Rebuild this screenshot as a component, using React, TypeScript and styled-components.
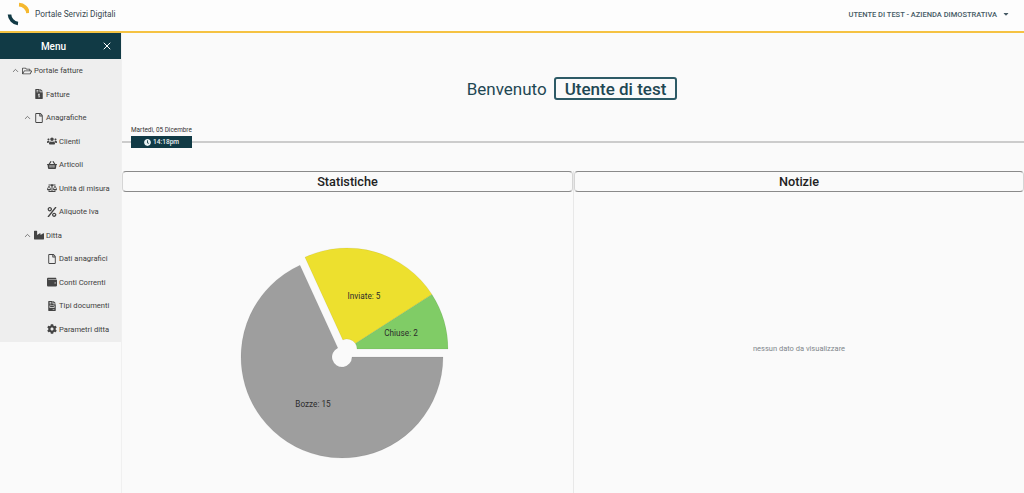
import React from 'react';
import { ChevronUp, X } from 'lucide-react';
import {
  FaBalanceScale,
  FaCaretDown,
  FaClock,
  FaCog,
  FaFileInvoice,
  FaFileInvoiceDollar,
  FaIndustry,
  FaPercent,
  FaRegFile,
  FaRegFolderOpen,
  FaShoppingBasket,
  FaUsers,
  FaWallet,
} from 'react-icons/fa';
import styled, { createGlobalStyle } from 'styled-components';

const GlobalStyle = createGlobalStyle`
  html, body {
    margin: 0;
    height: 100%;
    overflow: hidden;
    background: #fafafa;
    font-family: Roboto, "Liberation Sans", sans-serif;
  }
  #root {
    height: 100%;
  }
`;

const Page = styled.div`
  display: flex;
  flex-direction: column;
  height: 493px;
  width: 1024px;
`;

const TopBar = styled.header`
  box-sizing: border-box;
  flex: none;
  height: 33px;
  display: flex;
  align-items: center;
  justify-content: space-between;
  padding: 0 14px 3px 7px;
  background: #fdfdfd;
  border-bottom: 2px solid #f5c242;
`;

const Brand = styled.div`
  display: flex;
  align-items: center;
  gap: 6px;
  font-size: 8.3px;
  color: #37474f;
`;

const UserMenu = styled.div`
  display: flex;
  align-items: center;
  gap: 5px;
  font-size: 7.5px;
  font-weight: 500;
  color: #455a64;
`;

const Body = styled.div`
  flex: 1;
  display: flex;
  min-height: 0;
`;

const Sidebar = styled.aside`
  box-sizing: border-box;
  flex: none;
  width: 122px;
  border-right: 1px solid #f0f0f0;
`;

const MenuHeader = styled.div`
  height: 26px;
  display: flex;
  align-items: center;
  justify-content: center;
  position: relative;
  padding-right: 14px;
  background: #113a45;
  color: #fff;
  font-size: 10px;
  font-weight: 500;
`;

const CloseButton = styled.span`
  position: absolute;
  right: 8px;
  top: 7px;
  display: flex;
`;

const MenuList = styled.ul`
  list-style: none;
  margin: 0;
  padding: 0 0 0.5px;
  background: #eeeeee;
`;

const MenuItem = styled.li<{ $indent: number }>`
  height: 23.5px;
  display: flex;
  align-items: center;
  gap: 1px;
  padding-left: ${({ $indent }) => $indent}px;
  font-size: 7.6px;
  color: #404040;
`;

const Caret = styled.span`
  display: flex;
  width: 9px;
  justify-content: center;
  color: #555;
`;

const IconSlot = styled.span`
  display: flex;
  width: 12px;
  justify-content: center;
  font-size: 10px;
  color: #444;
`;

const Main = styled.main`
  flex: 1;
  display: flex;
  flex-direction: column;
  min-width: 0;
`;

const Welcome = styled.div`
  display: flex;
  align-items: center;
  justify-content: center;
  gap: 7px;
  height: 23px;
  margin-top: 44px;
  padding-right: 2px;
  color: #1f4753;
  font-size: 17px;
`;

const UserBadge = styled.span`
  box-sizing: border-box;
  height: 23px;
  display: flex;
  align-items: center;
  padding: 0 9px;
  border: 2px solid #2d5a66;
  border-radius: 3px;
  font-weight: 500;
`;

const Timeline = styled.div`
  margin-top: 25px;
  padding-left: 9px;
  height: 25px;
  background: linear-gradient(#cccccc, #cccccc) 0 16px / 100% 2px no-repeat;
`;

const DateLabel = styled.div`
  font-size: 6.4px;
  line-height: 11px;
  color: #333;
`;

const TimeChip = styled.div`
  box-sizing: border-box;
  width: 61px;
  height: 12px;
  display: flex;
  align-items: center;
  justify-content: center;
  gap: 2px;
  background: #113a45;
  color: #e9f1f2;
  font-size: 6.6px;
  font-weight: 500;
`;

const Panels = styled.div`
  flex: 1;
  display: grid;
  grid-template-columns: 452px 1fr;
  margin-top: 21px;
  min-height: 0;
`;

const Panel = styled.section<{ $divided?: boolean }>`
  box-sizing: border-box;
  display: flex;
  flex-direction: column;
  min-height: 0;
  border-right: ${({ $divided }) => ($divided ? '1px solid #e8e8e8' : 'none')};
`;

const PanelTitle = styled.h2`
  box-sizing: border-box;
  flex: none;
  height: 21px;
  margin: 0;
  display: flex;
  align-items: center;
  justify-content: center;
  border: 1px solid #8a8a8a;
  border-left-color: #d5d5d5;
  border-right-color: #d5d5d5;
  border-radius: 4px;
  font-size: 12.7px;
  font-weight: 500;
  color: #222;
`;

const ChartArea = styled.div`
  flex: 1;
  position: relative;
`;

const Empty = styled.div`
  flex: 1;
  display: flex;
  align-items: center;
  justify-content: center;
  padding-top: 11px;
  font-size: 7.5px;
  color: #80868b;
`;

const PieSvg = styled.svg`
  position: absolute;
  left: 0;
  top: 0;
`;

const SliceLabel = styled.text`
  font-size: 8.2px;
  font-family: Roboto, "Liberation Sans", sans-serif;
  fill: #2c2c2c;
  text-anchor: middle;
`;

type Slice = { from: number; to: number; fill: string; cx: number; cy: number };

const polar = (cx: number, cy: number, r: number, deg: number) => {
  const a = (deg * Math.PI) / 180;
  return `${cx + r * Math.cos(a)} ${cy + r * Math.sin(a)}`;
};

const slicePath = ({ from, to, cx, cy }: Slice) => {
  const big = to - from > 180 ? 1 : 0;
  return [
    `M${polar(cx, cy, 101, from)}`,
    `A101 101 0 ${big} 1 ${polar(cx, cy, 101, to)}`,
    `L${polar(cx, cy, 10, to)}`,
    `A10 10 0 ${big} 0 ${polar(cx, cy, 10, from)}`,
    'Z',
  ].join(' ');
};

// centres are relative to the chart area, which starts at 122,192
const slices: Slice[] = [
  { from: 0, to: 245.4, fill: '#9e9e9e', cx: 220, cy: 165 },
  { from: 245.4, to: 327.3, fill: '#ede02e', cx: 225, cy: 157 },
  { from: 327.3, to: 360, fill: '#80cc66', cx: 225, cy: 157 },
];

const Logo = () => (
  <svg width="22" height="24" viewBox="0 0 22 24">
    <path d="M12 2.6A9.5 9.5 0 0 1 21 11" fill="none" stroke="#f5b82e" strokeWidth="3.6" />
    <path d="M2.5 12.5A9.5 9.5 0 0 0 11 21.5" fill="none" stroke="#113a45" strokeWidth="3.6" />
  </svg>
);

const menu = [
  { label: 'Portale fatture', indent: 11, caret: true, icon: <FaRegFolderOpen /> },
  { label: 'Fatture', indent: 33, icon: <FaFileInvoiceDollar /> },
  { label: 'Anagrafiche', indent: 23, caret: true, icon: <FaRegFile /> },
  { label: 'Clienti', indent: 46, icon: <FaUsers /> },
  { label: 'Articoli', indent: 46, icon: <FaShoppingBasket /> },
  { label: 'Unità di misura', indent: 46, icon: <FaBalanceScale /> },
  { label: 'Aliquote Iva', indent: 46, icon: <FaPercent /> },
  { label: 'Ditta', indent: 23, caret: true, icon: <FaIndustry /> },
  { label: 'Dati anagrafici', indent: 46, icon: <FaRegFile /> },
  { label: 'Conti Correnti', indent: 46, icon: <FaWallet /> },
  { label: 'Tipi documenti', indent: 46, icon: <FaFileInvoice /> },
  { label: 'Parametri ditta', indent: 46, icon: <FaCog /> },
];

export default function App() {
  return (
    <Page>
      <GlobalStyle />
      <TopBar>
        <Brand>
          <Logo />
          Portale Servizi Digitali
        </Brand>
        <UserMenu>
          UTENTE DI TEST - AZIENDA DIMOSTRATIVA
          <FaCaretDown size={8} />
        </UserMenu>
      </TopBar>
      <Body>
        <Sidebar>
          <MenuHeader>
            Menu
            <CloseButton>
              <X size={12} strokeWidth={2} />
            </CloseButton>
          </MenuHeader>
          <MenuList>
            {menu.map((item) => (
              <MenuItem key={item.label} $indent={item.indent}>
                {item.caret && (
                  <Caret>
                    <ChevronUp size={9} />
                  </Caret>
                )}
                <IconSlot>{item.icon}</IconSlot>
                {item.label}
              </MenuItem>
            ))}
          </MenuList>
        </Sidebar>
        <Main>
          <Welcome>
            Benvenuto
            <UserBadge>Utente di test</UserBadge>
          </Welcome>
          <Timeline>
            <DateLabel>Martedì, 05 Dicembre</DateLabel>
            <TimeChip>
              <FaClock size={7} />
              14:18pm
            </TimeChip>
          </Timeline>
          <Panels>
            <Panel $divided>
              <PanelTitle>Statistiche</PanelTitle>
              <ChartArea>
                <PieSvg width="451" height="281" viewBox="0 0 451 281">
                  {slices.map((s) => (
                    <path key={s.fill} d={slicePath(s)} fill={s.fill} stroke="rgba(0,0,0,0.08)" strokeWidth="0.8" />
                  ))}
                  <SliceLabel x="242" y="107">Inviate: 5</SliceLabel>
                  <SliceLabel x="279" y="144">Chiuse: 2</SliceLabel>
                  <SliceLabel x="191" y="215">Bozze: 15</SliceLabel>
                </PieSvg>
              </ChartArea>
            </Panel>
            <Panel>
              <PanelTitle>Notizie</PanelTitle>
              <Empty>nessun dato da visualizzare</Empty>
            </Panel>
          </Panels>
        </Main>
      </Body>
    </Page>
  );
}
